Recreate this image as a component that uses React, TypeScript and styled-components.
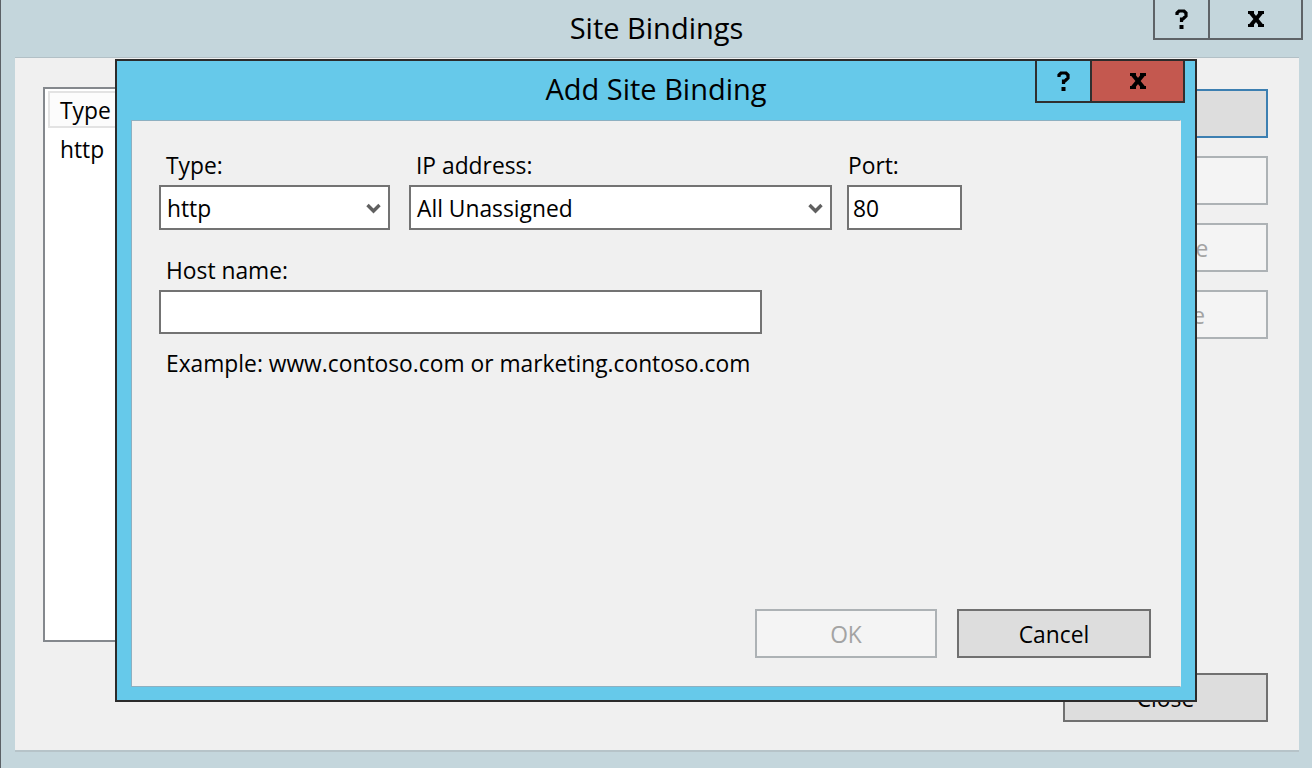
import React from "react";
import styled, { createGlobalStyle } from "styled-components";

const GlobalStyle = createGlobalStyle`
  html, body {
    margin: 0;
    padding: 0;
    background: #c4d6dc;
  }
  body {
    font-family: "Open Sans", "Segoe UI", sans-serif;
    color: #000;
    overflow: hidden;
  }
  * { box-sizing: border-box; }
`;

const Window = styled.div`
  position: relative;
  width: 1312px;
  height: 768px;
  background: #c4d6dc;
  border-left: 1px solid #5b6166;
  display: flex;
  flex-direction: column;
`;

const TitleBar = styled.div<{ $h: number; $bleed?: number }>`
  display: grid;
  grid-template-columns: 1fr auto 1fr;
  align-items: start;
  height: ${(p) => p.$h}px;
  flex: none;
  margin: 0 ${(p) => -(p.$bleed || 0)}px;
`;

const Title = styled.div`
  grid-column: 2;
  margin-top: 8px;
  font-size: 29px;
  line-height: 39px;
  white-space: nowrap;
`;

const CaptionGroup = styled.div<{ $right: number }>`
  grid-column: 3;
  justify-self: end;
  display: flex;
  margin-right: ${(p) => p.$right}px;
`;

const CaptionButton = styled.div<{ $w: number; $h: number; $bg: string; $line: string }>`
  width: ${(p) => p.$w}px;
  height: ${(p) => p.$h}px;
  background: ${(p) => p.$bg};
  border: 2px solid ${(p) => p.$line};
  border-top: none;
  display: flex;
  align-items: center;
  justify-content: center;
  & + & {
    border-left: none;
  }
`;

const Client = styled.div`
  flex: 1;
  margin: 0 13px 16px 14px;
  background: #f0f0f0;
  border-top: 1px solid #b2c0c6;
  border-bottom: 2px solid #b6c3c8;
  display: grid;
  grid-template-columns: 1fr 205px;
  grid-template-rows: 1fr auto;
  column-gap: 23px;
  row-gap: 31px;
  padding: 29px 31px 28px 28px;
  font-size: 22.8px;
`;

const ListView = styled.div`
  background: #fff;
  border: 2px solid #84888d;
  padding: 2px 0 0 3px;
  overflow: hidden;
`;

const ListHeader = styled.div`
  height: 37px;
  border: 2px solid #e3e3e3;
  border-right: none;
  background: #fcfcfc;
  display: flex;
  align-items: center;
  padding: 1px 0 0 10px;
`;

const ListRow = styled.div`
  height: 42px;
  display: flex;
  align-items: center;
  padding: 1px 0 0 12px;
`;

const ButtonStack = styled.div`
  display: flex;
  flex-direction: column;
  gap: 18px;
  padding-top: 2px;
`;

type Variant = "default" | "normal" | "disabled";

const PushButton = styled.div<{ $variant: Variant; $w?: number }>`
  width: ${(p) => (p.$w ? `${p.$w}px` : "100%")};
  height: 49px;
  border: 2px solid
    ${(p) =>
      p.$variant === "default" ? "#3c7fb1" : p.$variant === "normal" ? "#707070" : "#adb2b5"};
  background: ${(p) => (p.$variant === "disabled" ? "#f4f4f4" : "#dddddd")};
  color: ${(p) => (p.$variant === "disabled" ? "#a3a3a3" : "#000")};
  font-size: 22.8px;
  display: flex;
  align-items: center;
  justify-content: center;
  padding-top: 1px;
  flex: none;
`;

const CloseSlot = styled.div`
  grid-column: 2;
  grid-row: 2;
`;

const Dialog = styled.div`
  position: absolute;
  left: 114px;
  top: 59px;
  width: 1082px;
  height: 643px;
  border: 2px solid #2b2b2b;
  background: #66c9ea;
  display: flex;
  flex-direction: column;
  padding: 0 14px 13px 14px;
  z-index: 2;
`;

const DialogClient = styled.div`
  flex: 1;
  background: #f0f0f0;
  border: 1px solid #8db0c1;
  border-right-color: #f0f0f0;
  display: flex;
  flex-direction: column;
  padding: 29px 29px 28px 27px;
  font-size: 22.8px;
`;

const FieldRow = styled.div`
  display: flex;
  align-items: flex-start;
`;

const FieldGroup = styled.div<{ $w: number; $ml?: number; $mt?: number }>`
  display: flex;
  flex-direction: column;
  width: ${(p) => p.$w}px;
  margin-left: ${(p) => p.$ml || 0}px;
  margin-top: ${(p) => p.$mt || 0}px;
`;

const Label = styled.div<{ $indent?: number }>`
  line-height: 31px;
  padding-left: ${(p) => (p.$indent === undefined ? 7 : p.$indent)}px;
  margin-bottom: 4px;
  white-space: nowrap;
`;

const SelectBox = styled.div`
  height: 45px;
  border: 2px solid #737373;
  background: #fff;
  display: flex;
  align-items: center;
  justify-content: space-between;
  padding: 1px 7px 0 6px;
  white-space: nowrap;
`;

const TextBox = styled.div<{ $h: number }>`
  height: ${(p) => p.$h}px;
  border: 2px solid #737373;
  background: #fff;
  display: flex;
  align-items: center;
  padding: 1px 0 0 4px;
`;

const Hint = styled.div`
  margin-top: 14px;
  padding-left: 7px;
  line-height: 31px;
  white-space: nowrap;
`;

const ButtonRow = styled.div`
  margin-top: auto;
  display: flex;
  justify-content: flex-end;
  gap: 20px;
`;

const Chevron = () => (
  <svg width="15" height="11" viewBox="0 0 15 11">
    <polyline points="1.5,2 7.5,8 13.5,2" fill="none" stroke="#606060" strokeWidth="3.4" />
  </svg>
);

const HelpGlyph = () => (
  <svg width="13" height="20" viewBox="0 0 13 20">
    <path d="M2 6 V4 L4 2 H9 L11 4 V7 L8 10 H6.5 V13" fill="none" stroke="#000" strokeWidth="3.2" />
    <rect x="4.5" y="16" width="4" height="4" fill="#000" />
  </svg>
);

const CloseGlyph = () => (
  <svg width="18" height="16" viewBox="0 0 18 16">
    <line x1="4" y1="2" x2="14" y2="14" stroke="#000" strokeWidth="4" />
    <line x1="14" y1="2" x2="4" y2="14" stroke="#000" strokeWidth="4" />
    <rect x="1" y="0" width="6" height="3" fill="#000" />
    <rect x="11" y="0" width="6" height="3" fill="#000" />
    <rect x="1" y="13" width="6" height="3" fill="#000" />
    <rect x="11" y="13" width="6" height="3" fill="#000" />
  </svg>
);

export default function App() {
  return (
    <>
      <GlobalStyle />
      <Window>
        <TitleBar $h={57}>
          <Title>Site Bindings</Title>
          <CaptionGroup $right={9}>
            <CaptionButton $w={57} $h={40} $bg="#c4d6dc" $line="#5e6367">
              <HelpGlyph />
            </CaptionButton>
            <CaptionButton $w={93} $h={40} $bg="#c4d6dc" $line="#5e6367">
              <CloseGlyph />
            </CaptionButton>
          </CaptionGroup>
        </TitleBar>
        <Client>
          <ListView>
            <ListHeader>Type</ListHeader>
            <ListRow>http</ListRow>
          </ListView>
          <ButtonStack>
            <PushButton $variant="default">Add...</PushButton>
            <PushButton $variant="disabled">Edit...</PushButton>
            <PushButton $variant="disabled">Remove</PushButton>
            <PushButton $variant="disabled">Browse</PushButton>
          </ButtonStack>
          <CloseSlot>
            <PushButton $variant="normal">Close</PushButton>
          </CloseSlot>
        </Client>

        <Dialog>
          <TitleBar $h={59} $bleed={14}>
            <Title>Add Site Binding</Title>
            <CaptionGroup $right={10}>
              <CaptionButton $w={57} $h={42} $bg="#66c9ea" $line="#2f2f2f">
                <HelpGlyph />
              </CaptionButton>
              <CaptionButton $w={93} $h={42} $bg="#c4584f" $line="#2f2f2f">
                <CloseGlyph />
              </CaptionButton>
            </CaptionGroup>
          </TitleBar>
          <DialogClient>
            <FieldRow>
              <FieldGroup $w={231}>
                <Label>Type:</Label>
                <SelectBox>
                  <span>http</span>
                  <Chevron />
                </SelectBox>
              </FieldGroup>
              <FieldGroup $w={423} $ml={19}>
                <Label>IP address:</Label>
                <SelectBox>
                  <span>All Unassigned</span>
                  <Chevron />
                </SelectBox>
              </FieldGroup>
              <FieldGroup $w={115} $ml={15}>
                <Label $indent={1}>Port:</Label>
                <TextBox $h={45}>80</TextBox>
              </FieldGroup>
            </FieldRow>
            <FieldGroup $w={603} $mt={25}>
              <Label>Host name:</Label>
              <TextBox $h={44} />
            </FieldGroup>
            <Hint>Example: www.contoso.com or marketing.contoso.com</Hint>
            <ButtonRow>
              <PushButton $variant="disabled" $w={182}>OK</PushButton>
              <PushButton $variant="normal" $w={194}>Cancel</PushButton>
            </ButtonRow>
          </DialogClient>
        </Dialog>
      </Window>
    </>
  );
}
